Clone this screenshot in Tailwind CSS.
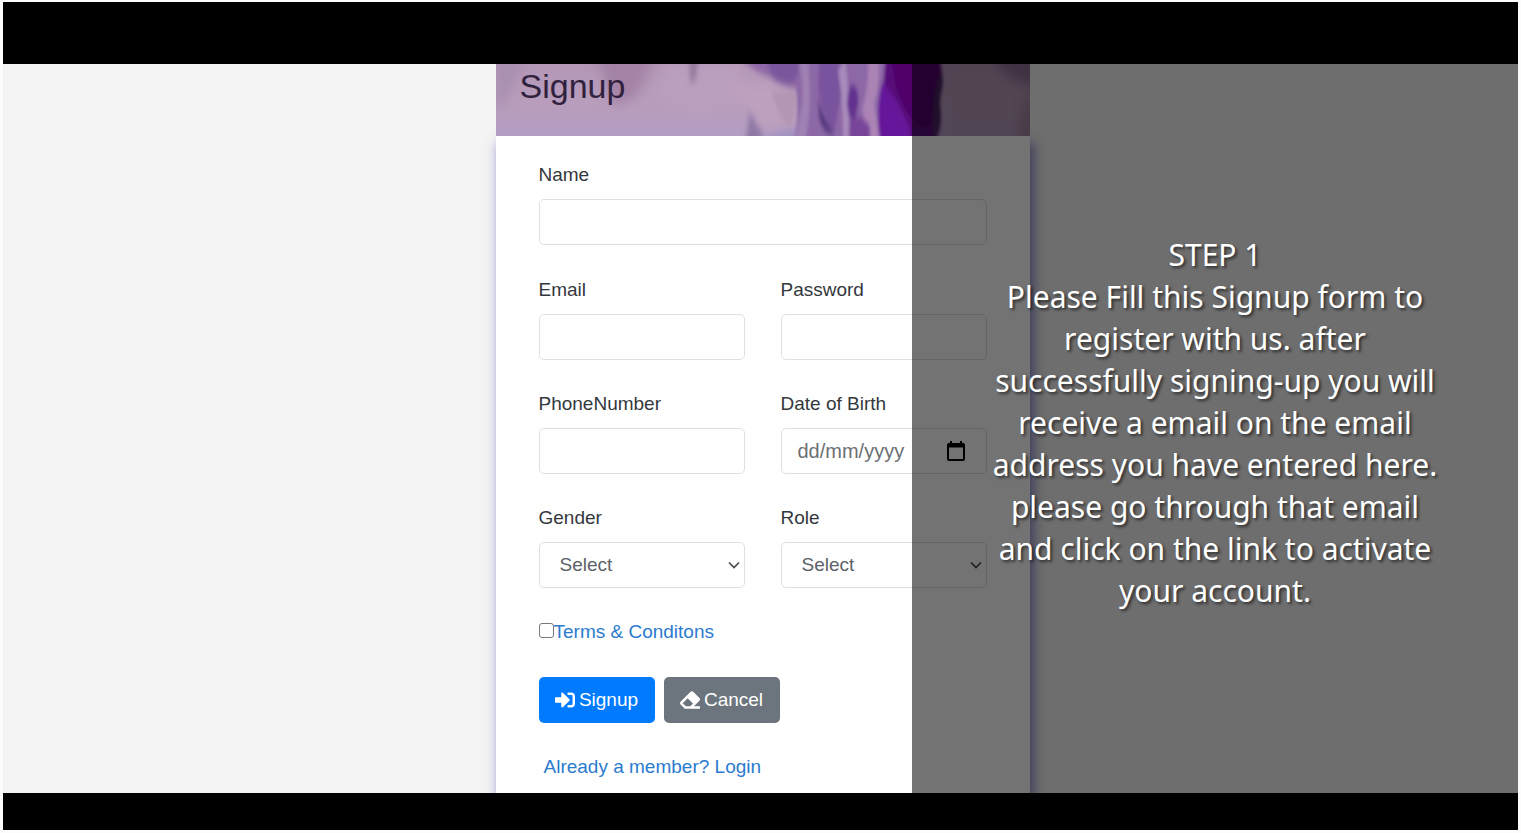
<!DOCTYPE html>
<html lang="en">
<head>
<meta charset="utf-8">
<title>Signup</title>
<script src="https://cdn.jsdelivr.net/npm/@tailwindcss/browser@4"></script>
</head>
<body class="bg-[#fcfcfc]">
<div class="flex h-screen flex-col px-[3px] pt-[2px] pb-[3px] font-['Liberation_Sans',Arial,sans-serif] text-[19px] text-[#34383c]">
  <header class="h-[62px] shrink-0 bg-black"></header>
  <main class="relative flex min-h-0 flex-1 justify-center overflow-hidden bg-[#f4f4f4] pl-1">
    <section class="flex w-full max-w-[534px] flex-col">
      <div class="relative h-[72px] shrink-0 overflow-hidden">
        <svg class="absolute inset-0 h-full w-full" viewBox="0 0 534 72" preserveAspectRatio="none" aria-hidden="true">
          <defs>
            <linearGradient id="wash" x1="0" y1="0" x2="0" y2="1"><stop offset="0" stop-color="#b497b7"/><stop offset=".55" stop-color="#b89dbc"/><stop offset="1" stop-color="#b39dc3"/></linearGradient>
            <filter id="soft" x="-50%" y="-50%" width="200%" height="200%"><feGaussianBlur stdDeviation="6"/></filter>
            <filter id="fine" x="-20%" y="-20%" width="140%" height="140%"><feGaussianBlur stdDeviation="1.5 3"/></filter>
            <filter id="streak" x="-60%" y="-30%" width="220%" height="160%"><feGaussianBlur stdDeviation="2 4"/></filter>
          </defs>
          <rect width="534" height="72" fill="url(#wash)"/>
          <g filter="url(#soft)">
            <path d="M0 -5H30L12 30L0 50Z" fill="#a88fb0"/>
            <path d="M100 -8H160L140 32L118 42Z" fill="#a382a6"/>
            <path d="M170 0H245V35L200 50L160 30Z" fill="#bb9fbf"/>
            <path d="M230 20H300V66H265Z" fill="#bda0be"/>
          </g>
          <g filter="url(#streak)">
            <path d="M193 -8H203L199 18H194Z" fill="#957b9f"/>
            <path d="M252 46Q260 60 275 82H248Q254 62 252 46Z" fill="#8f78a4"/>
            <path d="M262 76Q290 62 310 64L330 82H262Z" fill="#a293c2"/>
          </g>
          <g filter="url(#fine)">
            <path d="M238 -12H400V86H296Q304 56 300 24Q285 24 274 13Q258 8 238 -12Z" fill="#8d68a6"/>
            <path d="M268 -12H302Q306 6 298 18Q282 20 274 8Z" fill="#7b579d"/>
            <path d="M275 26Q288 30 298 26Q302 50 294 64Q284 56 275 26Z" fill="#b495b3"/>
            <path d="M300 -12Q308 10 306 40L298 84H308Q318 40 311 -12Z" fill="#a081b3"/>
            <path d="M324 -12H346Q350 14 342 46L338 70Q326 50 322 24Z" fill="#79529d"/>
            <path d="M322 34Q326 52 338 70Q328 72 323 54Z" fill="#53367f"/>
            <path d="M342 6Q348 40 347 86H352Q355 40 349 -6Z" fill="#a98bbb"/>
            <path d="M355 20Q364 22 362 42L358 60Q346 44 355 20Z" fill="#64318f"/>
            <path d="M372 -12H382Q385 20 378 40Q382 60 384 86H376Q370 60 366 46Q374 20 372 -12Z" fill="#ab84b5"/>
            <path d="M354 56Q364 48 374 62V86H353Z" fill="#78449a"/>
            <path d="M390 -12H442Q446 4 447 18Q442 30 444 46Q448 66 434 86H388Q380 60 386 36Z" fill="#560c79"/>
            <path d="M386 18Q402 34 414 66V86H386Q378 50 386 18Z" fill="#66189a"/>
            <path d="M394 -12H442L445 30Q440 60 428 64Q412 58 400 24Z" fill="#500569"/>
            <path d="M444 8Q450 18 443 34Q448 56 438 78Q434 40 444 8Z" fill="#46245d"/>
          </g>
          <g filter="url(#soft)">
            <path d="M458 -12H550V90H458Z" fill="#b49ab4" opacity=".5"/>
            <path d="M492 -12H550V22Q515 26 492 -12Z" fill="#8d6f96"/>
            <path d="M530 30L520 80H540V30Z" fill="#a0829f"/>
          </g>
        </svg>
        <h1 class="relative pt-px pl-6 text-[34px] leading-[42px] text-[#30223e]">Signup</h1>
      </div>
      <form class="flex-1 bg-white px-[43px] pt-6 shadow-[3px_7px_12px_rgba(24,24,160,0.55)]" onsubmit="return false">
        <div class="mb-[30px] flex flex-col gap-[10px]">
          <label for="name" class="leading-[29px]">Name</label>
          <input id="name" type="text" class="h-[46px] w-full rounded-[5px] border border-[#dee1e4] px-4">
        </div>
        <div class="grid grid-cols-2 gap-x-9 gap-y-[29px]">
          <div class="flex flex-col gap-[10px]">
            <label for="email" class="leading-[29px]">Email</label>
            <input id="email" type="email" class="h-[46px] w-full rounded-[5px] border border-[#dee1e4] px-4">
          </div>
          <div class="flex flex-col gap-[10px]">
            <label for="password" class="leading-[29px]">Password</label>
            <input id="password" type="password" class="h-[46px] w-full rounded-[5px] border border-[#dee1e4] px-4">
          </div>
          <div class="flex flex-col gap-[10px]">
            <label for="phone" class="leading-[29px]">PhoneNumber</label>
            <input id="phone" type="tel" class="h-[46px] w-full rounded-[5px] border border-[#dee1e4] px-4">
          </div>
          <div class="flex flex-col gap-[10px]">
            <label for="dob" class="leading-[29px]">Date of Birth</label>
            <div class="flex h-[46px] items-center rounded-[5px] border border-[#dee1e4] pr-5 pl-4">
              <input id="dob" type="text" placeholder="dd/mm/yyyy" class="min-w-0 flex-1 text-[20px] placeholder:text-[#6c6f73]">
              <button type="button" aria-label="Open calendar" class="shrink-0">
                <svg class="h-[22px] w-5" viewBox="0 0 20 22" fill="none" stroke="#000" stroke-width="2"><rect x="2" y="4" width="16" height="16" rx="1"/><path d="M2 5.500H18" stroke-width="4"/><path d="M5 1V5M15 1V5"/></svg>
              </button>
            </div>
          </div>
          <div class="flex flex-col gap-[10px]">
            <label for="gender" class="leading-[29px]">Gender</label>
            <div class="relative">
              <select id="gender" class="h-[46px] w-full appearance-none rounded-[5px] border border-[#dee1e4] bg-white pl-5 text-[#5c6268]"><option>Select</option><option>Female</option><option>Male</option></select>
              <svg class="pointer-events-none absolute top-[19px] right-[5px] h-2 w-3" viewBox="0 0 12 8" fill="none" stroke="#4a4d50" stroke-width="1.700"><path d="M1 1.500L6 6.500L11 1.500"/></svg>
            </div>
          </div>
          <div class="flex flex-col gap-[10px]">
            <label for="role" class="leading-[29px]">Role</label>
            <div class="relative">
              <select id="role" class="h-[46px] w-full appearance-none rounded-[5px] border border-[#dee1e4] bg-white pl-5 text-[#5c6268]"><option>Select</option><option>User</option></select>
              <svg class="pointer-events-none absolute top-[19px] right-[5px] h-2 w-3" viewBox="0 0 12 8" fill="none" stroke="#4a4d50" stroke-width="1.700"><path d="M1 1.500L6 6.500L11 1.500"/></svg>
            </div>
          </div>
        </div>
        <div class="mt-[29px] flex items-center leading-[29px]">
          <input id="terms" type="checkbox" aria-label="Accept the terms" class="mb-[2px] h-[15px] w-[15px] appearance-none rounded-[3px] border border-[#77797c] bg-white checked:bg-[#0275ff]">
          <a href="#terms" class="text-[#2b7bce]">Terms &amp; Conditons</a>
        </div>
        <div class="mt-[31px] flex gap-[9px] text-white">
          <button type="submit" class="flex h-[46px] w-[116px] items-center justify-center gap-1 rounded-[5px] bg-[#007bff]">
            <svg class="h-5 w-5" viewBox="0 0 512 512" fill="#fff"><path d="M416 448h-84c-6.600 0-12-5.400-12-12v-40c0-6.600 5.400-12 12-12h84c17.700 0 32-14.300 32-32V160c0-17.700-14.300-32-32-32h-84c-6.600 0-12-5.400-12-12V76c0-6.600 5.400-12 12-12h84c53 0 96 43 96 96v192c0 53-43 96-96 96zm-47-209L201 71c-15-15-41-4.500-41 17v96H24c-13.300 0-24 10.700-24 24v96c0 13.300 10.700 24 24 24h136v96c0 21.500 26 32 41 17l168-168c9.300-9.400 9.300-24.600 0-34z"/></svg>
            Signup
          </button>
          <button type="reset" class="flex h-[46px] w-[116px] items-center justify-center gap-1 rounded-[5px] bg-[#6c757d]">
            <svg class="h-5 w-5" viewBox="0 0 512 512" fill="#fff"><path d="M497.941 273.941c18.745-18.745 18.745-49.137 0-67.882l-160-160c-18.745-18.745-49.136-18.746-67.883 0l-256 256c-18.745 18.745-18.745 49.137 0 67.882l96 96A48.004 48.004 0 0 0 144 480h356c6.627 0 12-5.373 12-12v-40c0-6.627-5.373-12-12-12H355.883l142.058-142.059zm-302.627-62.627l137.373 137.373L265.373 416H150.628l-80-80 124.686-124.686z"/></svg>
            Cancel
          </button>
        </div>
        <p class="mt-[29px] pl-[5px] leading-[29px]"><a href="#login" class="text-[#2b7bce]">Already a member? Login</a></p>
      </form>
    </section>
    <aside class="pointer-events-none absolute inset-y-0 right-0 flex w-2/5 items-center justify-center bg-black/55 pb-3">
      <p class="text-center font-['Noto_Sans',sans-serif] text-[30px] leading-[42px] text-white [text-shadow:2px_2px_3px_rgba(0,0,0,0.6)]">STEP 1<br>Please Fill this Signup form to<br>register with us. after<br>successfully signing-up you will<br>receive a email on the email<br>address you have entered here.<br>please go through that email<br>and click on the link to activate<br>your account.</p>
    </aside>
  </main>
  <footer class="h-[37px] shrink-0 bg-black"></footer>
</div>
</body>
</html>
